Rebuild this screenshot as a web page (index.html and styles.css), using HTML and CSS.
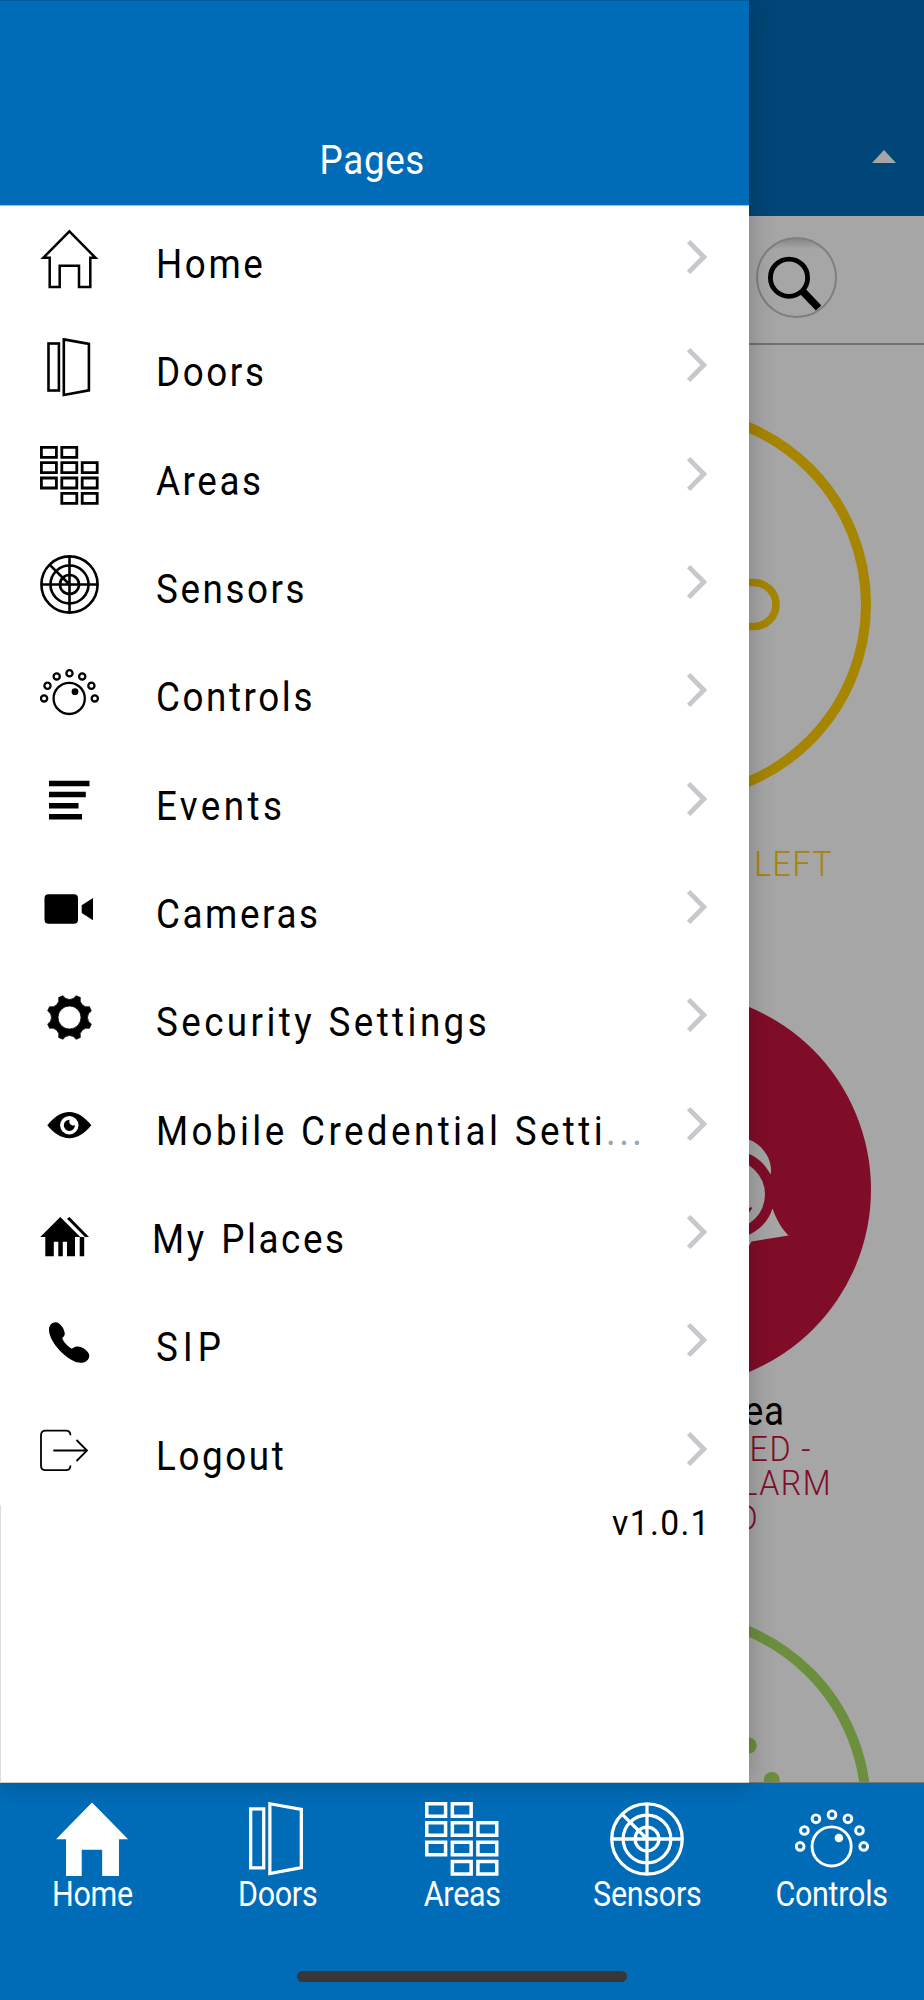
FILE: index.html
```html
<!DOCTYPE html>
<html lang="en">
<head>
  <meta charset="UTF-8">
  <title>Pages</title>
  <meta name="viewport" content="width=device-width, initial-scale=1.0">
  <link rel="stylesheet" href="styles.css">
</head>
<body>
  <!-- Shared icons -->
  <svg class="sprite" xmlns="http://www.w3.org/2000/svg">
    <symbol id="doors" viewBox="0 0 59 59">
      <g fill="none" stroke="currentColor" stroke-width="2.6">
        <rect x="8.5" y="5.5" width="10.4" height="47"/>
        <path d="M23.8 1.4 48.9 5.9V52.3L23.8 57Z"/>
      </g>
    </symbol>
    <symbol id="areas" viewBox="0 0 59 59">
      <g fill="none" stroke="currentColor" stroke-width="2.8">
        <path d="M1.4 1.4h15v10h-15zM21.8 1.4h15v10h-15z"/>
        <path d="M1.4 16.6h15v10h-15zM21.8 16.6h15v10h-15zM42.2 16.6h15v10h-15z"/>
        <path d="M1.4 32h15v10h-15zM21.8 32h15v10h-15zM42.2 32h15v10h-15z"/>
        <path d="M21.8 47.4h15v10h-15zM42.2 47.4h15v10h-15z"/>
      </g>
    </symbol>
    <symbol id="sensors" viewBox="0 0 59 59">
      <g fill="none" stroke="currentColor" stroke-width="2.6">
        <circle cx="29.5" cy="29.5" r="28.1"/>
        <circle cx="29.5" cy="29.5" r="19"/>
        <circle cx="29.5" cy="29.5" r="9.5"/>
        <path d="M29.5 1V58M1 29.5H58M9.8 9.8 29.5 29.5"/>
      </g>
    </symbol>
    <symbol id="controls" viewBox="0 0 59 59">
      <g fill="none" stroke="currentColor" stroke-width="2.3">
        <circle cx="29.2" cy="35.4" r="15.6"/>
        <circle cx="4.1" cy="35.4" r="3.1"/>
        <circle cx="7.5" cy="22.7" r="3.1"/>
        <circle cx="16.7" cy="13.4" r="3.1"/>
        <circle cx="29.5" cy="10.2" r="3.1"/>
        <circle cx="42.2" cy="13.4" r="3.1"/>
        <circle cx="51.4" cy="22.7" r="3.1"/>
        <circle cx="54.8" cy="35.4" r="3.1"/>
      </g>
      <circle cx="35" cy="28.7" r="3.4" fill="currentColor"/>
    </symbol>
    <symbol id="chevron" viewBox="0 0 22 36">
      <path d="M3.6 2.6 18.8 18 3.6 33.4" fill="none" stroke="currentColor" stroke-width="4.8"/>
    </symbol>
  </svg>

  <div class="app">
    <main class="page">
      <header class="page-header"><span class="caret"></span></header>
      <div class="search-bar">
        <button class="search-btn" aria-label="Search">
          <svg viewBox="0 0 81 81">
            <circle cx="33" cy="40.7" r="18.6" fill="none" stroke="#000" stroke-width="4.8"/>
            <path d="M46.5 54.2 62.6 71" stroke="#000" stroke-width="7.5"/>
          </svg>
        </button>
      </div>

      <section class="cards">
        <article class="card yellow">
          <svg class="dial" viewBox="0 0 395 395">
            <circle cx="197.5" cy="197.5" r="192.5" fill="none" stroke="currentColor" stroke-width="10"/>
            <rect x="240" y="175.5" width="60" height="44" rx="22" fill="none" stroke="currentColor" stroke-width="7.6"/>
          </svg>
          <div class="card-name"></div>
          <div class="card-status"><span class="line-a">LEFT</span></div>
        </article>

        <article class="card red">
          <svg class="dial" viewBox="0 0 395 395">
            <circle cx="197.5" cy="197.5" r="197.5" fill="currentColor"/>
            <circle cx="254.7" cy="202.5" r="34.3" fill="#fff"/>
            <path d="M273 147.5C288 153.5 297 169 294.7 182.5C289 172 281 165 273 162Z" fill="#fff"/>
            <path d="M273 242.8C285 237 293 228 296.5 216.5C301 229 306 237 312.5 243.5L275.5 249.5 273 254Z" fill="#fff"/>
            <path d="M268 222 275 214.5 276 216.5 272 222Z" fill="currentColor"/>
          </svg>
          <div class="card-name"><span>Area</span></div>
          <div class="card-status">
            <span class="line-b">ARMED -</span>
            <span class="line-c">ALARM</span>
            <span class="line-d">D</span>
          </div>
        </article>

        <article class="card green">
          <svg class="dial" viewBox="0 0 395 395">
            <circle cx="197.5" cy="197.5" r="192.5" fill="none" stroke="currentColor" stroke-width="10"/>
            <circle cx="272.7" cy="134.5" r="8" fill="currentColor"/>
            <circle cx="295.8" cy="169" r="8" fill="currentColor"/>
          </svg>
        </article>
      </section>
      <div class="overlay"></div>
    </main>

    <nav class="tabs">
      <a class="tab">
        <svg viewBox="0 0 59 59"><path d="M29.5 .3 58.3 29.7H51V59H37.6V38H21.3V59H8.8V29.7H.8Z" fill="currentColor"/></svg>
        <span>Home</span>
      </a>
      <a class="tab"><svg><use href="#doors"/></svg><span>Doors</span></a>
      <a class="tab"><svg><use href="#areas"/></svg><span>Areas</span></a>
      <a class="tab"><svg><use href="#sensors"/></svg><span>Sensors</span></a>
      <a class="tab"><svg><use href="#controls"/></svg><span>Controls</span></a>
      <div class="home-indicator"></div>
    </nav>

    <aside class="drawer">
      <header class="drawer-header"><h1>Pages</h1></header>
      <ul class="menu">
        <li>
          <svg class="icon" viewBox="0 0 59 59"><path d="M29.4 1.4 55.5 27.8H50.3V57H39V35.8H19.7V57H9.7V27.8H3.3Z" fill="none" stroke="currentColor" stroke-width="2.5"/></svg>
          <span class="label">Home</span>
          <svg class="chevron"><use href="#chevron"/></svg>
        </li>
        <li>
          <svg class="icon"><use href="#doors"/></svg>
          <span class="label">Doors</span>
          <svg class="chevron"><use href="#chevron"/></svg>
        </li>
        <li>
          <svg class="icon"><use href="#areas"/></svg>
          <span class="label">Areas</span>
          <svg class="chevron"><use href="#chevron"/></svg>
        </li>
        <li>
          <svg class="icon"><use href="#sensors"/></svg>
          <span class="label">Sensors</span>
          <svg class="chevron"><use href="#chevron"/></svg>
        </li>
        <li>
          <svg class="icon"><use href="#controls"/></svg>
          <span class="label">Controls</span>
          <svg class="chevron"><use href="#chevron"/></svg>
        </li>
        <li>
          <svg class="icon" viewBox="0 0 59 59"><path d="M9 9.7h40.5v5.5H9zM9 20.8h36.8v5.5H9zM9 31.9h29.5v5.5H9zM9 43h33v5.5H9z"/></svg>
          <span class="label label-wide">Events</span>
          <svg class="chevron"><use href="#chevron"/></svg>
        </li>
        <li>
          <svg class="icon" viewBox="0 0 59 59"><rect x="4.5" y="14.3" width="33.5" height="29.4" rx="4"/><path d="M41.7 25.3 53 18V40.3L41.7 33Z"/></svg>
          <span class="label">Cameras</span>
          <svg class="chevron"><use href="#chevron"/></svg>
        </li>
        <li>
          <svg class="icon" viewBox="-29.5 -29.5 59 59"><path fill-rule="evenodd" stroke="currentColor" stroke-width=".8" stroke-linejoin="round" d="M-6.45-21.77A7.4 7.4 0 0 0 6.45-21.77L10.83-19.95A7.4 7.4 0 0 0 19.95-10.83L21.77-6.45A7.4 7.4 0 0 0 21.77 6.45L19.95 10.83A7.4 7.4 0 0 0 10.83 19.95L6.45 21.77A7.4 7.4 0 0 0-6.45 21.77L-10.83 19.95A7.4 7.4 0 0 0-19.95 10.83L-21.77 6.45A7.4 7.4 0 0 0-21.77-6.45L-19.95-10.83A7.4 7.4 0 0 0-10.83-19.95ZM0-11.5A11.5 11.5 0 1 0 0 11.5A11.5 11.5 0 1 0 0-11.5Z"/></svg>
          <span class="label label-wide">Security Settings</span>
          <svg class="chevron"><use href="#chevron"/></svg>
        </li>
        <li>
          <svg class="icon" viewBox="0 0 59 59">
            <path d="M7.3 29.3C14 21 21 16 29.3 16S44.5 21 51.3 29.3C44.5 37.5 37.5 42.2 29.3 42.2S14 37.5 7.3 29.3Z"/>
            <circle cx="29.3" cy="29.3" r="9.2" fill="#fff"/>
            <path d="M29.6 23.8A5.6 5.6 0 1 0 35 29.3C31.5 30.5 28.2 27.5 29.6 23.8Z"/>
          </svg>
          <span class="label label-wide">Mobile Credential Setti<i>...</i></span>
          <svg class="chevron"><use href="#chevron"/></svg>
        </li>
        <li>
          <svg class="icon" viewBox="0 0 59 59">
            <path d="M20.3 12 40.3 32H35V51.3H27V36.7H22.8V51.3H18.3V36.7H13.8V51.3H5.3V32H.2Z"/>
            <path d="M27 13.8 29.5 12 49 32H45ZM39.7 32H44.2V51.3H39.7Z"/>
          </svg>
          <span class="label label-places">My Places</span>
          <svg class="chevron"><use href="#chevron"/></svg>
        </li>
        <li>
          <svg class="icon" viewBox="0 0 59 59"><path d="M9 17C9 12 12 9.2 15.5 9.2C20.5 9.2 25 17 24.8 21C24.6 23.5 22.5 24 22.3 25.5C23.5 29 28 33.5 31.5 35.5C33 35.5 34 33.4 37.5 33.4C42.5 33.4 49.3 38.5 49.3 42.5C49.3 47 45.5 49.8 41 49.8C28 49.8 9 29 9 17Z"/></svg>
          <span class="label label-sip">SIP</span>
          <svg class="chevron"><use href="#chevron"/></svg>
        </li>
        <li>
          <svg class="icon" viewBox="0 0 59 59"><path d="M30.5 14.3C30.3 11 29 9.7 26 9.7H5.5Q1 9.7 1 14.2V44.7Q1 49.2 5.5 49.2H26C29 49.2 30.3 47.8 30.5 44.5M13.3 29.5H46.8M36.5 19 47 29.5 36.5 40" fill="none" stroke="currentColor" stroke-width="1.8"/></svg>
          <span class="label">Logout</span>
          <svg class="chevron"><use href="#chevron"/></svg>
        </li>
      </ul>
      <div class="version"><span>v1.0.1</span></div>
    </aside>
  </div>
</body>
</html>
```
FILE: styles.css
```css
* {
  box-sizing: border-box;
}
body {
  margin: 0;
  font-family: Roboto, "Liberation Sans", sans-serif;
  background: #fff;
}
.sprite {
  display: none;
}
.app {
  position: relative;
  display: flex;
  flex-direction: column;
  width: 924px;
  height: 2000px;
  overflow: hidden;
}

/* Page behind the drawer */
.page {
  position: relative;
  height: 1783px;
  overflow: hidden;
  background: #fff;
}
.overlay {
  position: absolute;
  inset: 0;
  background: rgba(0, 0, 0, 0.35);
  border-bottom: 1px solid #777;
}
.page-header {
  display: flex;
  justify-content: flex-end;
  align-items: flex-start;
  height: 216px;
  padding: 150px 28px 0 0;
  background: #006cb8;
}
.caret {
  border: 12px solid transparent;
  border-top: 0;
  border-bottom: 13px solid #fff;
}
.search-bar {
  display: flex;
  justify-content: flex-end;
  height: 129px;
  padding: 21px 87px 0 0;
  border-bottom: 2px solid #a9b0b5;
}
.search-btn {
  width: 81px;
  height: 81px;
  padding: 0;
  border: 2px solid #c4c4c4;
  border-radius: 50%;
  background: linear-gradient(#cfcfcf, #fff 10px);
}
.search-btn svg {
  display: block;
  width: 81px;
  height: 81px;
  margin: -2px;
}
.cards {
  padding: 62px 0 0 476px;
}
.card {
  width: 395px;
  margin-bottom: 74.5px;
}
.dial {
  display: block;
  width: 395px;
  height: 395px;
}
.yellow { color: #fc0; }
.red { color: #c5143e; }
.green { color: #a5dc5e; }
.card-name {
  height: 40px;
  margin: 5px 86px 1px 0;
  font-size: 40px;
  line-height: 40px;
  text-align: right;
  color: #000;
}
.card-status {
  min-height: 69px;
  font-size: 35px;
  font-weight: 300;
  line-height: 34.5px;
  letter-spacing: 1.6px;
  text-align: right;
}
.card-name span,
.card-status span {
  display: block;
  transform: scaleX(0.92);
  transform-origin: right;
}
.card-name span {
  letter-spacing: 1px;
}
.card-status .line-a { margin-right: 38px; }
.card-status .line-b { margin-right: 59px; }
.card-status .line-c { margin-right: 39px; }
.card-status .line-d { margin-right: 112px; }

/* Bottom tabs */
.tabs {
  display: grid;
  grid-template-columns: repeat(5, 1fr);
  grid-template-rows: 188px 11px;
  height: 217px;
  background: #006cb8;
  color: #fff;
}
.tab {
  display: flex;
  flex-direction: column;
  align-items: center;
  padding-top: 19px;
}
.tab svg {
  width: 74px;
  height: 74px;
}
.tab span {
  font-size: 35px;
  line-height: 38px;
  letter-spacing: -0.3px;
  transform: scaleX(0.87);
}
.home-indicator {
  grid-column: 1 / -1;
  justify-self: center;
  width: 330px;
  border-radius: 6px;
  background: #373737;
}

/* Drawer */
.drawer {
  position: absolute;
  top: 0;
  left: 0;
  width: 749px;
  height: 1783px;
  background: #fff;
  border-bottom: 1px solid #ccc;
  box-shadow: 0 0 26px rgba(0, 0, 0, 0.24);
}
.drawer-header {
  display: flex;
  justify-content: center;
  align-items: flex-end;
  height: 206px;
  padding-bottom: 20px;
  background: #006cb8;
  border-top: 1px solid #005a9a;
  border-bottom: 1px solid #8fbfe3;
}
.drawer-header h1 {
  margin: 0 5px 0 0;
  font-size: 40px;
  font-weight: 400;
  line-height: 48px;
  letter-spacing: 0.7px;
  color: #fff;
  transform: scaleX(0.92);
}
.menu {
  margin: -1px 0 0;
  padding: 0;
  list-style: none;
}
.menu li {
  display: flex;
  align-items: center;
  height: 108.33px;
  padding: 0 42px 0 40px;
}
.icon {
  flex: none;
  width: 59px;
  height: 59px;
  overflow: visible;
}
.label {
  flex: 1;
  min-width: 0;
  margin-left: 57px;
  padding-top: 12px;
  font-size: 40px;
  line-height: 48px;
  letter-spacing: 2.8px;
  white-space: nowrap;
  transform: scaleX(0.92);
  transform-origin: left;
}
.label-wide {
  letter-spacing: 3.7px;
  word-spacing: 1px;
}
.label-places {
  margin-left: 53px;
  word-spacing: 3px;
}
.label-sip {
  letter-spacing: 5.4px;
}
.label i {
  font-style: normal;
  color: #9aa5ab;
}
.chevron {
  flex: none;
  width: 22px;
  height: 36px;
  margin-bottom: 4px;
  color: #c7c7cc;
}
.version {
  display: flex;
  justify-content: flex-end;
  height: 278px;
  padding: 1px 38px 0 0;
  border-left: 1px solid #ddd;
  font-size: 35px;
  line-height: 36px;
}
.version span {
  letter-spacing: 1.4px;
  transform: scaleX(0.96);
  transform-origin: right;
}
```
